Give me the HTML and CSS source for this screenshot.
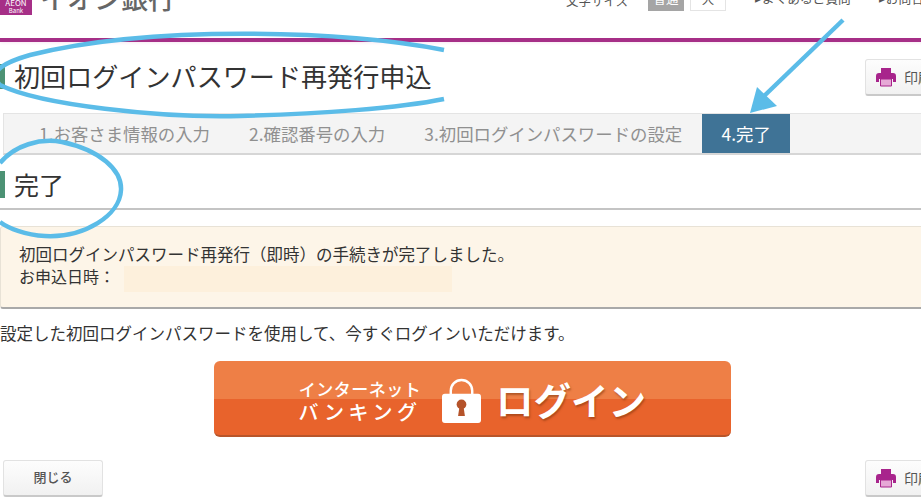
FILE: index.html
```html
<!DOCTYPE html>
<html lang="ja">
<head>
    <meta charset="UTF-8">
    <meta name="viewport" content="width=device-width, initial-scale=1.0">
    <title>初回ログインパスワード再発行申込</title>
    <link rel="stylesheet" href="styles.css">
</head>
<body>
    <div class="page">
        <header class="site-header">
            <div class="logo">
                <div class="logo-mark">AEON<small>Bank</small></div>
                <div class="logo-name">イオン銀行</div>
            </div>
            <div class="font-size">
                <span class="font-size-label">文字サイズ</span>
                <span class="size-btn size-btn-active">普通</span>
                <span class="size-btn">大</span>
            </div>
            <nav class="header-links">
                <span>▸よくあるご質問</span>
                <span>▸お問合せ</span>
            </nav>
        </header>

        <div class="title-row">
            <h1 class="page-title">初回ログインパスワード再発行申込</h1>
            <button class="btn btn-print">
                <svg class="print-icon" viewBox="0 0 20 20"><path d="M5 1h10v5H5z"/><path d="M3 6h14a3 3 0 0 1 3 3v6h-3v-3H3v3H0V9a3 3 0 0 1 3-3z"/><path class="print-paper" d="M4.500 12h11v7h-11z"/></svg>
                印刷
            </button>
        </div>

        <ol class="steps">
            <li class="step">1.お客さま情報の入力</li>
            <li class="step">2.確認番号の入力</li>
            <li class="step">3.初回ログインパスワードの設定</li>
            <li class="step step-active">4.完了</li>
        </ol>

        <h2 class="section-title">完了</h2>

        <div class="notice">
            <p>初回ログインパスワード再発行（即時）の手続きが完了しました。</p>
            <p class="notice-date">お申込日時：<span class="date-mask"></span></p>
        </div>

        <p class="lead">設定した初回ログインパスワードを使用して、今すぐログインいただけます。</p>

        <div class="login-wrap">
            <a class="login-btn">
                <span class="login-sub">
                    <span class="login-sub-top">インターネット</span>
                    <span class="login-sub-bottom">バンキング</span>
                </span>
                <svg class="lock-icon" viewBox="0 0 40 46">
                    <path d="M9 18V13a11 11 0 0 1 22 0v5" fill="none" stroke="#fff" stroke-width="2.500"/>
                    <rect x="0" y="16" width="40" height="30" rx="3" fill="#fff"/>
                    <circle cx="20" cy="27" r="5" fill="#b5532a"/>
                    <path d="M18 29h4l1.500 10h-7z" fill="#b5532a"/>
                </svg>
                <span class="login-main">ログイン</span>
            </a>
        </div>

        <div class="footer-row">
            <button class="btn btn-close">閉じる</button>
            <button class="btn btn-print">
                <svg class="print-icon" viewBox="0 0 20 20"><path d="M5 1h10v5H5z"/><path d="M3 6h14a3 3 0 0 1 3 3v6h-3v-3H3v3H0V9a3 3 0 0 1 3-3z"/><path class="print-paper" d="M4.500 12h11v7h-11z"/></svg>
                印刷
            </button>
        </div>

        <!-- hand drawn marks on top of the screenshot -->
        <svg class="marks" viewBox="0 0 921 503">
            <path d="M444 50C340 30 150 25 30 55C-5 65-10 75 0 85C40 105 160 118 240 116C320 114 400 108 444 99"/>
            <path d="M0 163C15 145 40 138 62 142C100 150 122 170 121 190C120 215 85 238 45 236C25 235 8 228 0 222"/>
            <path d="M843 20L762 98"/>
            <polygon points="750,113 757,87 777,106"/>
        </svg>
    </div>
</body>
</html>
```

FILE: styles.css
```css
html, body {
    margin: 0;
    padding: 0;
    width: 921px;
    height: 503px;
    overflow: hidden;
    background-color: #fff;
}
body {
    font-family: "Noto Sans CJK JP", "Liberation Sans", sans-serif;
    color: #333;
}
.page {
    position: relative;
    width: 968px;
    height: 503px;
}
.site-header {
    display: flex;
    align-items: flex-end;
    height: 38px;
    overflow: hidden;
    border-bottom: 4px solid #a62f87;
    box-shadow: 0 0 4px #f3dcec;
    box-sizing: content-box;
}
.logo {
    display: flex;
    align-items: flex-end;
    width: 566px;
    height: 38px;
}
.logo-mark {
    width: 32px;
    height: 22px;
    margin-bottom: 23px;
    padding-top: 5px;
    box-sizing: border-box;
    background-color: #a62f87;
    color: #fff;
    font-size: 8px;
    line-height: 9px;
    text-align: center;
    flex: none;
}
.logo-mark small {
    display: block;
    font-size: 6px;
    line-height: 7px;
}
.logo-name {
    margin-left: 8px;
    margin-bottom: 21px;
    font-size: 27px;
    line-height: 38px;
    font-weight: 500;
    color: #666;
    white-space: nowrap;
}
.font-size {
    display: flex;
    align-items: flex-end;
    margin-bottom: 27px;
}
.font-size-label {
    width: 82px;
    font-size: 12.500px;
    line-height: 20px;
    color: #555;
}
.size-btn {
    width: 36px;
    height: 24px;
    margin-right: 6px;
    box-sizing: border-box;
    border: 1px solid #e4e4e4;
    font-size: 12.500px;
    line-height: 22px;
    text-align: center;
    color: #555;
}
.size-btn-active {
    background-color: #a5a5a5;
    border-color: #a5a5a5;
    color: #fff;
}
.header-links {
    display: flex;
    gap: 28px;
    margin-left: 23px;
    margin-bottom: 30px;
    font-size: 12.700px;
    line-height: 20px;
    color: #555;
    white-space: nowrap;
}
.title-row {
    display: flex;
    justify-content: space-between;
    align-items: center;
    height: 71px;
    padding-right: 3px;
}
.page-title {
    margin: 0 0 3px;
    padding-left: 9px;
    border-left: 5px solid #4c9274;
    font-size: 26.100px;
    font-weight: 400;
    line-height: 25px;
    color: #333;
}
.btn {
    height: 37px;
    width: 100px;
    box-sizing: border-box;
    border: 1px solid #e2e2e2;
    border-bottom: 2px solid #c9c9c9;
    border-radius: 3px;
    background: linear-gradient(#fdfdfd, #f1f1f1);
    font-family: inherit;
    font-size: 14px;
    color: #555;
    padding: 0;
}
.btn-print {
    display: flex;
    align-items: center;
    gap: 8px;
    padding-left: 10px;
}
.print-icon {
    width: 20px;
    height: 20px;
    fill: #a8248c;
}
.print-paper {
    fill: #e6a8d6;
    stroke: #a8248c;
}
.steps {
    display: flex;
    margin: 0 0 0 3px;
    padding: 0 0 0 35px;
    list-style: none;
    height: 42px;
    box-sizing: border-box;
    background-color: #f4f4f4;
    border: 1px solid #e4e4e4;
    border-bottom: 2px solid #d6d6d6;
}
.step {
    margin-right: 39px;
    font-size: 17.400px;
    line-height: 39px;
    color: #909090;
    white-space: nowrap;
}
.step:nth-child(3) {
    margin-right: 20px;
}
.step-active {
    width: 88px;
    margin-right: 0;
    background-color: #3f7396;
    color: #fff;
    text-align: center;
}
.section-title {
    display: flex;
    align-items: center;
    margin: 0;
    height: 55px;
    padding-top: 5px;
    box-sizing: border-box;
    border-bottom: 2px solid #c4c4c4;
    font-size: 25px;
    font-weight: 400;
    color: #333;
}
.section-title::before {
    content: "";
    width: 5px;
    height: 27px;
    margin-right: 9px;
    background-color: #4c9274;
}
.notice {
    height: 83px;
    margin-top: 16px;
    padding: 16px 0 0 18px;
    box-sizing: border-box;
    background-color: #fdf5e8;
    border: 1px solid #e8e2d6;
    border-bottom: 2px solid #a9a9a9;
    border-radius: 3px;
    font-size: 16.500px;
    line-height: 23px;
    color: #333;
}
.notice p {
    margin: 0;
}
.notice-date {
    display: flex;
    font-size: 16px;
    line-height: 21px;
}
.date-mask {
    width: 328px;
    height: 26px;
    margin-left: 9px;
    background-color: #fdf0dc;
}
.lead {
    margin: 12px 0 0;
    font-size: 16.500px;
    line-height: 24px;
    color: #333;
    white-space: nowrap;
}
.login-wrap {
    margin: 16px 0 0 214px;
}
.login-btn {
    display: flex;
    align-items: center;
    width: 517px;
    height: 76px;
    padding-left: 85px;
    box-sizing: border-box;
    border-bottom: 2px solid #b8552a;
    border-radius: 6px;
    background: linear-gradient(#ee7f46 0, #ee7f46 52%, #e8632c 52%, #e8632c 100%);
    color: #fff;
}
.login-sub {
    display: flex;
    flex-direction: column;
    align-items: center;
    width: 122px;
    margin-top: 6px;
    white-space: nowrap;
}
.login-sub-top {
    font-size: 17px;
    font-weight: 500;
    line-height: 21px;
    letter-spacing: 0.500px;
}
.login-sub-bottom {
    font-size: 20px;
    font-weight: 500;
    line-height: 25px;
    letter-spacing: 4.500px;
}
.lock-icon {
    width: 39px;
    height: 45px;
    margin: 4px 15px 0 21px;
}
.login-main {
    margin-top: 2px;
    font-size: 37.500px;
    font-weight: bold;
    line-height: 44px;
    text-shadow: 1px 2px 2px rgba(120, 50, 10, 0.5);
    white-space: nowrap;
}
.footer-row {
    display: flex;
    justify-content: space-between;
    margin: 23px 3px 0;
}
.btn-close {
    padding-bottom: 3px;
    font-size: 13px;
    font-weight: 500;
}
.marks {
    position: absolute;
    left: 0;
    top: 0;
    width: 921px;
    height: 503px;
    fill: #5bbce8;
}
.marks path {
    fill: none;
    stroke: #5bbce8;
    stroke-width: 4.500;
}
```
